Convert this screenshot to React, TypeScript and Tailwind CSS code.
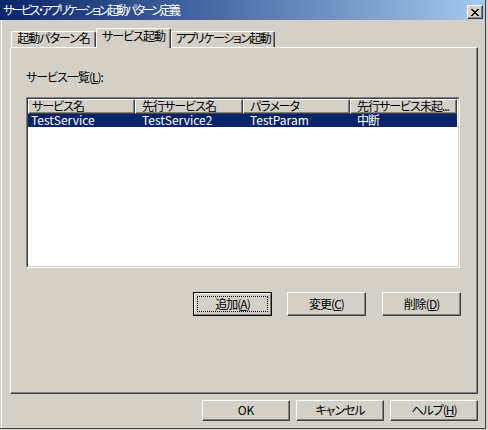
import React from "react";

const raised =
  "border border-t-white border-l-white border-r-[#404040] border-b-[#404040] shadow-[inset_-1px_-1px_#808080]";

const columns = [
  { label: "サービス名", w: "w-[107px]", pad: "pl-[3px]" },
  { label: "先行サービス名", w: "w-[108px]", pad: "pl-[6px]" },
  { label: "パラメータ", w: "w-[107px]", pad: "pl-[6px]" },
  { label: "先行サービス未起...", w: "w-[107px]", pad: "pl-[6px]" },
];

const rows = [["TestService", "TestService2", "TestParam", "中断"]];

const Mn: React.FC<{ k: string }> = ({ k }) => (
  <>
    (<span className="underline underline-offset-1">{k}</span>)
  </>
);

const CloseGlyph = () => (
  <svg width="8" height="7" viewBox="0 0 8 7" shapeRendering="crispEdges">
    <path
      fill="#000"
      d="M0 0h2v1H0z M6 0h2v1H6z M1 1h2v1H1z M5 1h2v1H5z M2 2h4v1H2z M3 3h2v1H3z M2 4h4v1H2z M1 5h2v1H1z M5 5h2v1H5z M0 6h2v1H0z M6 6h2v1H6z"
    />
  </svg>
);

const Tab: React.FC<{ label: string; w: string; active?: boolean; tight?: boolean }> = ({
  label,
  w,
  active,
  tight,
}) =>
  active ? (
    <div
      className={`${w} relative z-10 h-[20px] -mb-px bg-[#d4d0c8] border-t border-l border-white border-r border-r-[#404040] shadow-[inset_-1px_0_#808080] rounded-t-[2px] flex justify-center leading-[14px] whitespace-nowrap`}
    >
      {label}
    </div>
  ) : (
    <div
      className={`${w} ${
        tight ? "tracking-[-1.5px]" : ""
      } h-[16px] border-t border-l border-white border-r border-r-[#404040] shadow-[inset_-1px_0_#808080] rounded-t-[2px] flex justify-center leading-[12px] whitespace-nowrap`}
    >
      {label}
    </div>
  );

const App: React.FC = () => {
  return (
    <div className="w-[488px] h-[430px] bg-[#d4d0c8] text-[12px] tracking-[-1px] text-black font-['Noto_Sans_CJK_JP',sans-serif] [font-feature-settings:'palt'] select-none">
      <div className="w-[486px] h-[429px] flex flex-col border-r border-b border-[#404040]">
        {/* title bar */}
        <div className="h-[20px] flex justify-between bg-linear-to-r from-[#0a246a] to-[#a6caf0]">
          <div className="pt-[3px] pl-[3px] leading-[14px] tracking-[-2.5px] text-white whitespace-nowrap">
            サービス・アプリケーション起動パターン定義
          </div>
          <button
            className={`mt-[5px] mr-[2px] w-[16px] h-[14px] bg-[#d4d0c8] flex items-center justify-center ${raised}`}
          >
            <CloseGlyph />
          </button>
        </div>

        <div className="flex-1 ml-px border-l border-white flex flex-col pt-[8px]">
          {/* tabs */}
          <div className="flex items-end h-[19px] pl-[9px]">
            <Tab label="起動パターン名" w="w-[85px]" />
            <Tab label="サービス起動" w="w-[75px]" active />
            <Tab label="アプリケーション起動" w="w-[104px]" tight />
          </div>

          <div
            className={`ml-[8px] w-[468px] h-[347px] pl-[15px] pt-[22px] ${raised}`}
          >
            <div className="h-[14px] leading-[14px] whitespace-nowrap">
              サービス一覧<Mn k="L" />:
            </div>

            {/* list view */}
            <div className="mt-[13px] w-[434px] h-[171px] border border-t-[#808080] border-l-[#808080] border-r-white border-b-white">
              <div className="h-full border border-t-[#404040] border-l-[#404040] border-r-[#d4d0c8] border-b-[#d4d0c8] bg-white">
                <div className="flex h-[15px]">
                  {columns.map((c) => (
                    <div
                      key={c.label}
                      className={`${c.w} ${c.pad} h-full bg-[#d4d0c8] leading-[11px] whitespace-nowrap ${raised}`}
                    >
                      {c.label}
                    </div>
                  ))}
                </div>
                {rows.map((r) => (
                  <div
                    key={r[0]}
                    className="flex h-[13px] w-[429px] bg-[#0a246a] text-white leading-[12px]"
                  >
                    {r.map((cell, i) => (
                      <div
                        key={i}
                        className={`${columns[i].w} ${
                          i === 0 ? "pl-[3px]" : "pl-[7px]"
                        } ${i === 3 ? "" : "tracking-normal"} whitespace-nowrap`}
                      >
                        {cell}
                      </div>
                    ))}
                  </div>
                ))}
              </div>
            </div>

            {/* list buttons */}
            <div className="mt-[24px] ml-[167px] flex">
              <button className="w-[79px] h-[24px] border border-black bg-[#d4d0c8] p-0">
                <div className="h-full border border-t-white border-l-white border-r-[#808080] border-b-[#808080] p-[2px]">
                  <div className="h-full border border-dotted border-black flex items-center justify-center pb-px leading-[14px]">
                    追加<Mn k="A" />
                  </div>
                </div>
              </button>
              <button
                className={`ml-[15px] w-[79px] h-[24px] bg-[#d4d0c8] flex items-center justify-center pb-px leading-[14px] ${raised}`}
              >
                変更<Mn k="C" />
              </button>
              <button
                className={`ml-[16px] w-[79px] h-[24px] bg-[#d4d0c8] flex items-center justify-center pb-px leading-[14px] ${raised}`}
              >
                削除<Mn k="D" />
              </button>
            </div>
          </div>

          {/* dialog buttons */}
          <div className="mt-[6px] flex justify-end gap-[6px] pr-[7px]">
            <button
              className={`w-[88px] h-[21px] bg-[#d4d0c8] flex items-center justify-center pb-px leading-[14px] tracking-normal ${raised}`}
            >
              OK
            </button>
            <button
              className={`w-[88px] h-[21px] bg-[#d4d0c8] flex items-center justify-center pb-px leading-[14px] ${raised}`}
            >
              キャンセル
            </button>
            <button
              className={`w-[88px] h-[21px] bg-[#d4d0c8] flex items-center justify-center pb-px leading-[14px] ${raised}`}
            >
              ヘルプ<Mn k="H" />
            </button>
          </div>
        </div>
      </div>
    </div>
  );
};

export default App;
